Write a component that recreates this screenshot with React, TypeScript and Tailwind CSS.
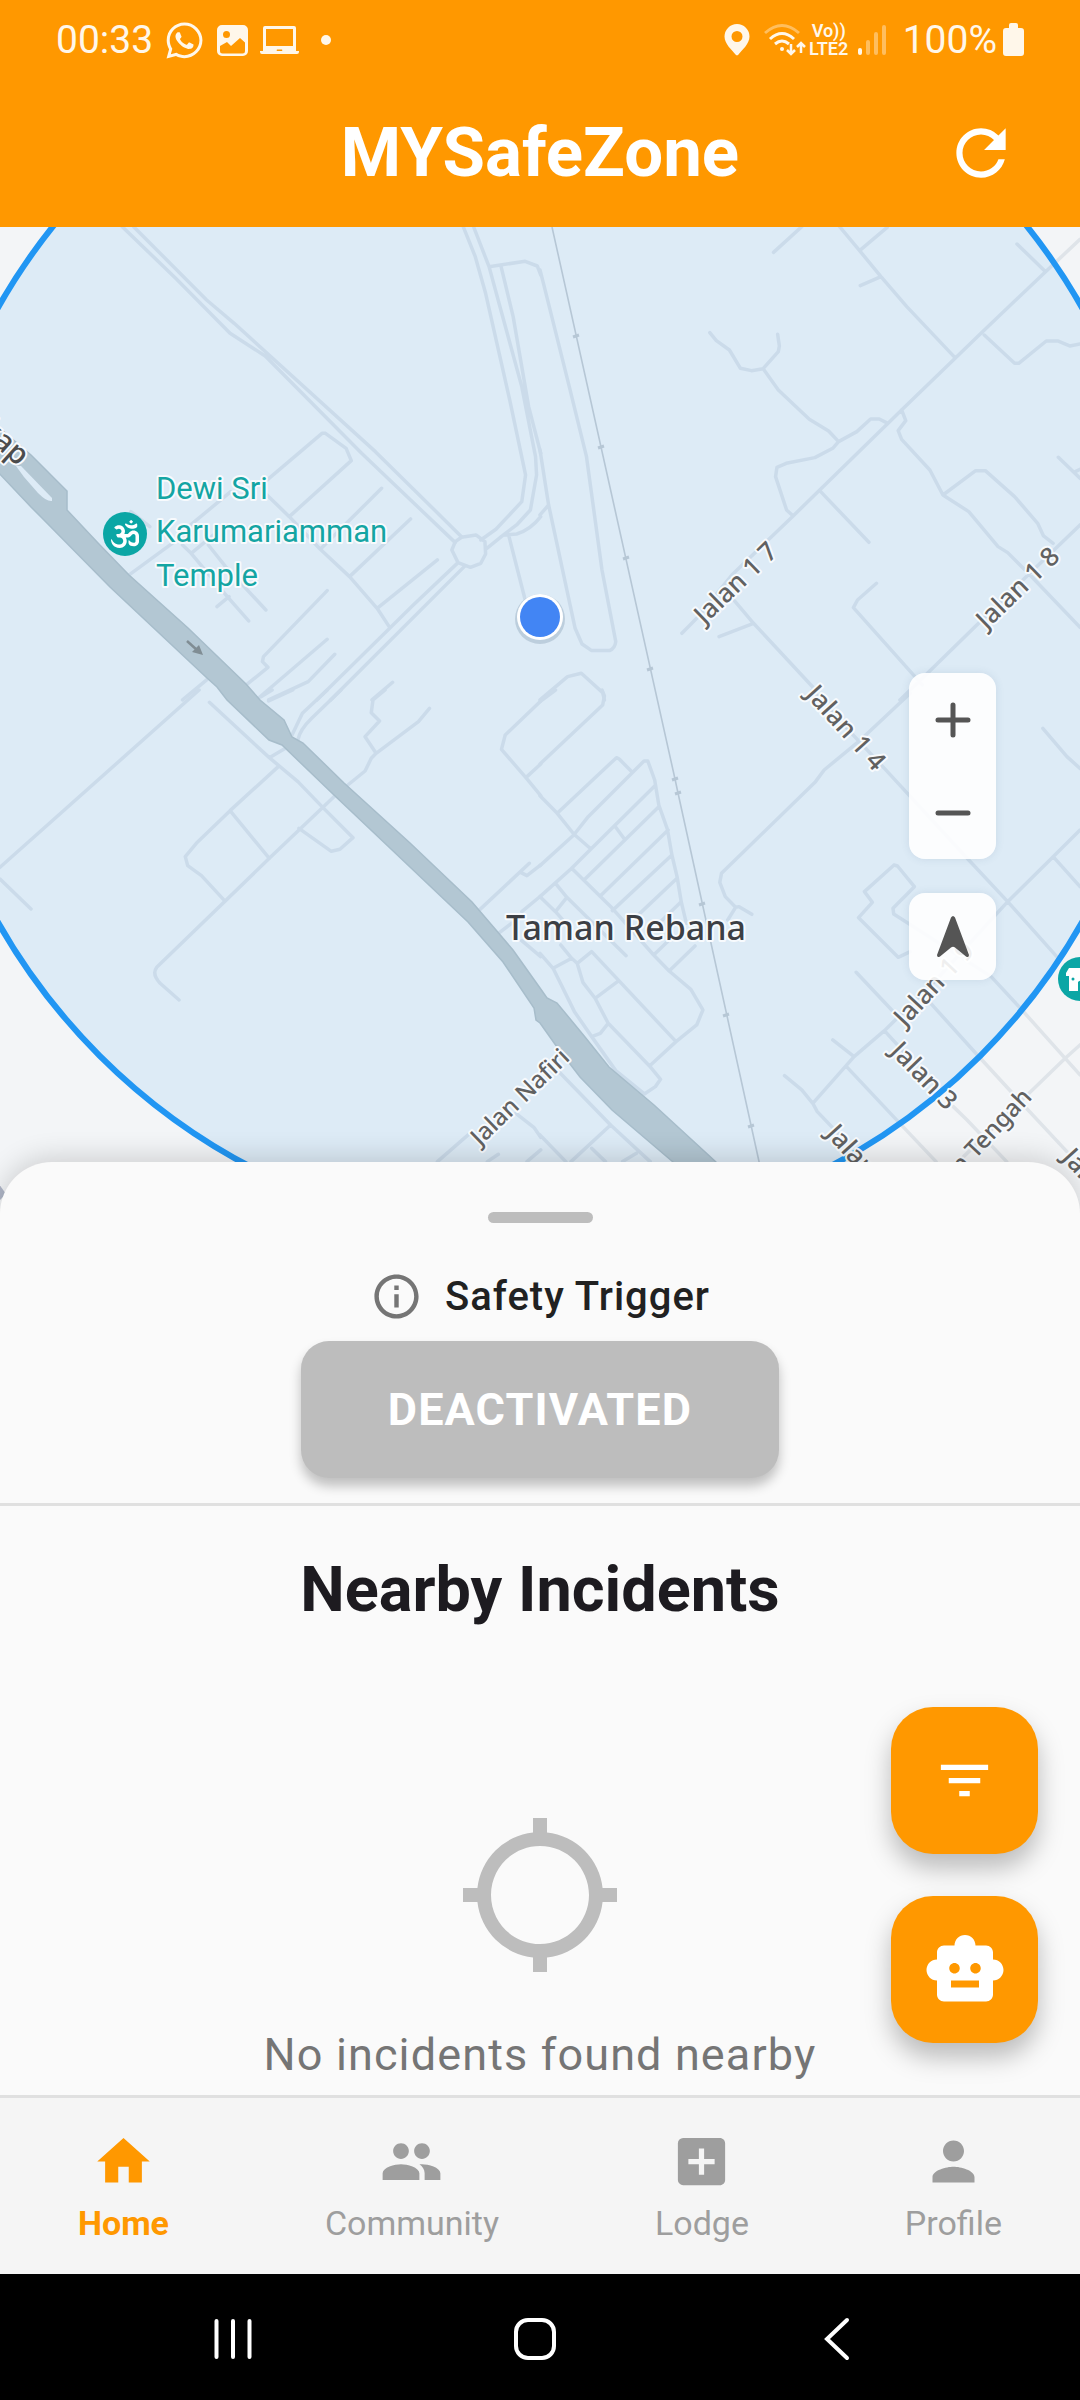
import { FaOm, FaWhatsapp } from "react-icons/fa";
import {
  MdAddBox,
  MdFilterList,
  MdHome,
  MdInfoOutline,
  MdLocationSearching,
  MdPeople,
  MdPerson,
  MdRefresh,
  MdSmartToy,
} from "react-icons/md";

/* Street geometry, stored per tile in tile units. */
const tiles = [
  {
    id: "north-west",
    transform: "translate(0 220) scale(0.3444 0.3333)",
    roads:
      "M355 20 L510 175 L668 340 L770 408 L1050 700 L1322 968 M388 20 L600 240 L680 310 L1090 695 L1340 950 M1340 952 L1382 945 L1408 965 L1410 1002 L1396 1030 L1366 1042 L1330 1028 L1312 990 L1322 965Z M1396 960 L1440 928 L1515 845 L1526 765 L1480 540 L1410 220 L1380 110 L1345 20 M1410 988 L1460 946 L1500 915 L1540 870 L1558 765 L1555 710 L1515 500 L1420 140 L1375 20 M1420 140 L1525 124 L1560 138 L1570 165 M1455 140 L1490 290 L1535 560 L1570 700 M1460 946 L1500 942 Q1540 930 1570 890 M1478 950 L1525 1140 M1330 1028 L1200 1155 L920 1440 M1348 1040 L960 1440 M550 918 L670 815 M770 785 L935 640 L945 640 L1005 685 L1020 722 L840 890 M770 820 L840 890 L930 988 L1015 1070 L1095 1165 L1130 1220 M1108 805 L930 988 M1192 897 L1015 1070 M1270 1020 L1095 1165 M375 1065 L500 970 M530 975 L555 1000 L660 1130 L722 1203 M630 1160 L665 1130 M555 1000 L620 945 M605 975 L655 1040 L772 1170 M950 1112 L765 1310 L762 1325 L778 1342 L715 1395 M950 1258 L750 1435 M972 1303 L895 1385 L780 1440 M1140 1387 L1080 1440 M600 1380 L530 1440 M380 875 L435 920",
  },
  {
    id: "north-east",
    transform: "translate(540 220) scale(0.3444 0.3333)",
    roads:
      "M0 150 L10 190 L85 500 L135 710 L180 1050 L220 1265 Q218 1285 202 1292 L150 1292 L122 1272 L102 1225 L25 855 L0 690 M0 885 L25 855 M678 97 L760 20 M870 20 L928 92 L990 170 L1065 260 L1205 413 M928 92 L1008 22 M930 197 L990 170 M1385 72 L1468 155 M1568 58 L1468 155 L1285 335 L1050 570 L735 888 L560 1062 L455 1195 L412 1240 M1290 345 L1378 430 L1390 430 L1470 363 L1503 363 L1538 378 L1568 372 M493 338 L512 362 L550 390 L582 445 L614 452 L648 446 L692 395 L695 378 L690 343 M648 446 L692 510 L782 598 L838 633 L867 665 M1010 610 L985 597 L960 597 L920 635 L867 665 L850 685 L798 713 L715 730 L688 742 L684 770 L716 870 L735 888 M1050 570 L1062 602 L1040 632 L1050 658 L1132 750 L1170 825 L1245 875 L1330 980 L1358 998 L1420 1062 L1568 1222 M1170 825 L1265 752 L1293 752 L1378 830 L1445 910 L1462 948 L1490 970 M1505 712 L1568 775 M1550 757 L1568 748 M1568 915 L1420 1062 L1090 1395 L1045 1440 M815 815 L955 967 M565 1143 L620 1210 L800 1410 M520 1250 L620 1210 M977 1090 L922 1140 L910 1163 L1110 1395 M0 1440 L80 1370 L120 1360 L182 1418 L187 1440",
  },
  {
    id: "south-west",
    transform: "translate(0 690) scale(0.3444 0.3333)",
    roads:
      "M578 0 L0 532 M0 567 L90 657 M608 37 L782 203 L865 275 L935 350 L1025 443 L987 478 L962 484 L868 415 M782 203 L825 177 M808 230 L668 362 L570 460 L538 500 L545 527 L585 557 L652 632 M668 362 L782 505 M972 318 L782 505 L455 832 Q440 852 465 880 L520 930 M848 135 L878 70 L950 0 M865 150 Q870 120 905 85 L990 0 M758 20 L790 0 M780 33 L850 0 M1118 0 L1083 30 L1078 68 L1102 93 L1060 140 L1092 190 L1215 95 L1247 55 M1092 190 L1078 205 L1060 243 L1010 285 M1568 35 L1467 135 L1456 178 L1527 263 L1570 317 M1527 263 L1570 222 M1390 662 L1537 520 M1513 548 L1530 557 L1570 525 M1515 665 L1570 618 M1450 728 L1485 700 M1515 752 L1570 800 M1498 1270 L1550 1312 L1570 1342 M1270 1415 L1370 1325 M1415 1415 L1447 1393 M1530 1415 L1570 1380",
  },
  {
    id: "south-east",
    transform: "translate(540 690) scale(0.3444 0.3333)",
    roads:
      "M0 35 L45 0 M180 0 L187 18 L182 45 L0 222 M50 370 L222 203 L230 207 L268 247 M0 317 L50 370 L98 432 L148 477 M0 527 L98 435 L140 380 L302 213 L313 213 L333 270 L345 345 L370 418 L383 495 L398 560 L410 635 L425 700 M333 288 L148 477 L92 535 L0 620 M220 412 L245 447 M345 350 L130 568 M372 420 L175 618 M383 495 L210 662 M398 565 L280 680 M410 635 L350 695 M92 535 L210 655 L330 795 L375 843 L438 898 L473 960 L455 1005 L395 1055 L318 1128 L350 1168 L335 1190 L303 1212 L220 1142 L150 1040 L100 965 L38 835 L0 790 M0 620 L45 665 L75 700 M45 580 L78 622 L45 665 M78 622 L150 695 L250 797 M330 795 L370 755 M375 843 L450 768 M38 835 L92 805 L60 765 M92 805 L108 820 L125 878 L160 925 L198 1000 L318 1128 M108 820 L150 785 L395 1055 M225 875 L160 925 M198 1000 L175 1030 L150 1040 M545 690 L568 652 L538 620 L522 577 L527 550 L800 275 L825 240 L925 155 L1075 10 M568 652 L578 650 L615 673 M790 0 L900 125 L1000 235 L1245 510 L1358 635 L1505 805 M1568 420 L1490 500 L1358 635 L1150 870 L1000 1022 L912 1100 L792 1240 L805 1265 L865 1330 M1490 500 L1568 590 M1460 115 L1530 200 L1568 235 M1028 525 L1038 528 L1087 590 L1025 655 L1027 672 L1310 860 L1395 955 L1525 1105 L1568 1155 M1028 525 L942 605 L965 637 L925 683 L1040 802 L1075 785 M918 847 L1035 975 M850 1050 L912 1100 M710 1157 L760 1200 L792 1240 M890 1130 L1040 1295 L1150 1415 M1000 1022 L1060 1090 M1130 935 L1270 1095 L1390 1230 L1530 1385 M1200 1250 L1240 1290 L1355 1415 M1568 1065 L1525 1105 L1420 1210 L1230 1400 M50 1140 L205 1305 L320 1415 M205 1305 L90 1415 M0 1335 L75 1415 M150 1375 L190 1415 M280 1390 L240 1415",
  },
];

const highway =
  "M-4 425 L31 455 L67 491 L67 510 L98 543 L129 575 L188 628 L246 684 L260 700 L284 720 L292 737 L303 743 L344 783 L410 843 L472 902 L496 930 L513 950 L540 988 L547 998 L557 1003 L585 1037 L609 1067 L654 1105 L716 1162 L760 1200 L720 1200 L673 1162 L612 1110 L580 1077 L557 1047 L540 1023 L536 1020 L534 1008 L503 962 L468 922 L334 795 L282 745 L269 740 L227 700 L217 687 L207 678 L110 587 L41 517 L31 507 L-4 470Z";

const sleepers = [
  [576, 336],
  [601, 447],
  [626, 558],
  [650, 669],
  [675, 779],
  [678, 793],
  [702, 904],
  [726, 1015],
  [751, 1126],
];

const streetLabels = [
  { text: "Jalan 1 7", x: 735, y: 582, angle: -44, size: 26 },
  { text: "Jalan 1 8", x: 1017, y: 587, angle: -44, size: 26 },
  { text: "Jalan 1 4", x: 847, y: 727, angle: 48, size: 26 },
  { text: "Jalan 1 9", x: 933, y: 983, angle: -47, size: 26 },
  { text: "Jalan 3", x: 925, y: 1075, angle: 46, size: 26 },
  { text: "Jalan Nafiri", x: 519, y: 1096, angle: -44, size: 24 },
  { text: "Jalan Tengah", x: 976, y: 1145, angle: -47, size: 24 },
  { text: "Jalan 1", x: 860, y: 1158, angle: 48, size: 26 },
  { text: "Jalan 2", x: 1096, y: 1182, angle: 48, size: 26 },
];

function CityMap() {
  return (
    <svg
      viewBox="0 227 1080 983"
      preserveAspectRatio="xMidYMin slice"
      className="absolute inset-0 h-full w-full"
      role="img"
      aria-label="Map around Taman Rebana"
    >
      <rect x="-500" y="0" width="2080" height="1400" fill="#f3f5f7" />
      <g fill="none" stroke="#dfe4e9" strokeWidth="3.5" strokeLinecap="round" strokeLinejoin="round">
        {tiles.map((tile) => (
          <g key={tile.id} transform={tile.transform}>
            <path d={tile.roads} vectorEffect="non-scaling-stroke" />
          </g>
        ))}
      </g>
      <path d={highway} fill="#c4cdd0" stroke="#b7c2c6" strokeWidth="1.5" />
      <path d="M16 466 L24 477 L38 493 Q47 502 52 501 L52 498 L21 466Z" fill="#f3f5f7" />
      <path d="M-4 1180 L6 1194 L-4 1204Z" fill="#b0b7c8" />
      <g fill="none" stroke="#c8cdd2">
        <path d="M552 227 L675 779 L678 793 L760 1166" strokeWidth="1.6" />
        {sleepers.map(([x, y]) => (
          <path key={y} d={`M${x - 3} ${y + 1} L${x + 3} ${y - 1}`} strokeWidth="3" />
        ))}
      </g>
      <circle cx="540" cy="615" r="623" fill="#2196f3" fillOpacity="0.1" />
      <circle cx="540" cy="615" r="623" fill="none" stroke="#2196f3" strokeWidth="6" />
      <path d="M187 641 L197 650" stroke="#808d94" strokeWidth="2.5" />
      <path d="M203 655 L192 652 L199 645Z" fill="#808d94" />

      <g
        fontFamily="'Noto Sans', sans-serif"
        fontWeight="500"
        fill="#616161"
        stroke="#f7fafd"
        strokeWidth="4"
        strokeLinejoin="round"
        paintOrder="stroke"
      >
        {streetLabels.map((label) => (
          <text
            key={label.text}
            transform={`translate(${label.x} ${label.y}) rotate(${label.angle})`}
            dominantBaseline="central"
            textAnchor="middle"
            fontSize={label.size}
          >
            {label.text}
          </text>
        ))}
        <text transform="translate(18 467) rotate(42)" textAnchor="end" fontSize="30" fill="#4c4c4c">
          kap
        </text>
        <text x="506" y="940" fontSize="34" fill="#3c3f45">
          Taman Rebana
        </text>
        <g fontFamily="Roboto, sans-serif" fontWeight="400" fontSize="31" fill="#14a5a3">
          <text x="156" y="499">Dewi Sri</text>
          <text x="156" y="542">Karumariamman</text>
          <text x="156" y="586">Temple</text>
        </g>
      </g>

      <circle cx="125" cy="534" r="22" fill="#0ba6a5" />
      <FaOm x={111} y={520} size={28} color="#ffffff" />

      <circle cx="1080" cy="979" r="22" fill="#0ba6a5" />
      <path
        d="M1069 968 h22 l3 7 h-3 v16 h-22 v-15 h-3 v-3 z M1078 991 v-9 a4 4 0 0 1 6 0 v9 z"
        fill="#ffffff"
        fillRule="evenodd"
      />
      <circle cx="1073" cy="979" r="1.5" fill="#0ba6a5" />

      <circle cx="540" cy="619" r="25" fill="#5b7894" fillOpacity="0.25" />
      <circle cx="540" cy="617" r="23" fill="#ffffff" />
      <circle cx="540" cy="617" r="20" fill="#4285f4" />
    </svg>
  );
}

function StatusBar() {
  return (
    <div className="flex h-20 items-center justify-between pr-14 pl-14 text-[#fff7ea]">
      <div className="flex items-center">
        <span className="w-[100px] text-[39px] leading-10">00:33</span>
        <FaWhatsapp className="ml-2 size-[41px]" />
        <svg viewBox="0 0 31 31" className="ml-3 size-[31px]" aria-hidden="true">
          <path
            fill="currentColor"
            fillRule="evenodd"
            d="M5 0h21a5 5 0 0 1 5 5v21a5 5 0 0 1-5 5H5a5 5 0 0 1-5-5V5a5 5 0 0 1 5-5zM9.500 6a3.500 3.500 0 1 0 0 7a3.500 3.500 0 1 0 0-7zM3 21v5a2.500 2.500 0 0 0 2.500 2.500h20A2.500 2.500 0 0 0 28 26v-8.500L23 13l-9 8-4-4z"
          />
        </svg>
        <svg viewBox="0 0 39 28" className="ml-3 h-7 w-[39px]" aria-hidden="true">
          <path
            fill="currentColor"
            fillRule="evenodd"
            d="M5 0h29a2 2 0 0 1 2 2v23h3v1a2 2 0 0 1-2 2H2a2 2 0 0 1-2-2v-1h3V2a2 2 0 0 1 2-2zM6 3v17h27V3zM17 23.500a1 1 0 0 0 0 1.500h5a1 1 0 0 0 0-1.500z"
          />
        </svg>
        <span className="ml-[22px] size-2.5 rounded-full bg-current" />
      </div>
      <div className="flex items-center">
        <svg viewBox="0 0 26 32" className="h-8 w-[26px]" aria-hidden="true">
          <path
            fill="currentColor"
            fillRule="evenodd"
            d="M13 0a12.500 12.500 0 0 1 12.500 12.500C25.500 20 18 26 14.500 30.500a2 2 0 0 1-3 0C8 26 .5 20 .5 12.500A12.500 12.500 0 0 1 13 0zm0 7a5.500 5.500 0 1 0 0 11a5.500 5.500 0 1 0 0-11z"
          />
        </svg>
        <svg viewBox="0 0 42 34" className="ml-3.5 h-[34px] w-[42px]" fill="none" stroke="currentColor" aria-hidden="true">
          <path d="M1 10 Q18 -5 35 10" strokeWidth="3" opacity="0.4" />
          <path d="M6 16 Q18 5 30 16" strokeWidth="3" />
          <path d="M11 21 Q18 15 25 21" strokeWidth="3" />
          <circle cx="18" cy="26" r="2" fill="currentColor" stroke="none" />
          <path d="M27 21v10M23 27l4 4 4-4M37 30V20M33 24l4-4 4 4" strokeWidth="2.500" />
        </svg>
        <div className="ml-0.5 w-[42px] text-center text-[18px] leading-[18px] font-semibold">
          Vo))
          <br />
          LTE2
        </div>
        <svg viewBox="0 0 29 30" className="ml-2 h-[30px] w-[29px]" fill="none" stroke="currentColor" strokeWidth="4" strokeLinecap="round" aria-hidden="true">
          <path d="M2 25v3" />
          <path d="M10 17v11M18 9v19M26 2v26" opacity="0.4" />
        </svg>
        <span className="ml-4 text-[39px] leading-10">100%</span>
        <svg viewBox="0 0 21 34" className="ml-1.5 h-[34px] w-[21px]" aria-hidden="true">
          <path fill="currentColor" d="M6 2q0-2 2-2h5q2 0 2 2v3h3q3 0 3 3v22q0 3-3 3H3q-3 0-3-3V8q0-3 3-3h3z" />
        </svg>
      </div>
    </div>
  );
}

const navItems = [
  { label: "Home", Icon: MdHome, active: true },
  { label: "Community", Icon: MdPeople, active: false },
  { label: "Lodge", Icon: MdAddBox, active: false },
  { label: "Profile", Icon: MdPerson, active: false },
];

export default function App() {
  return (
    <div className="flex min-h-screen flex-col bg-[#fafafa] font-['Roboto',sans-serif]">
      <header className="bg-[#ff9800]">
        <StatusBar />
        <div className="grid h-[147px] grid-cols-[1fr_auto_1fr] items-center pb-0.5">
          <h1 className="col-start-2 text-[69px] leading-20 font-bold text-white">MYSafeZone</h1>
          <button type="button" aria-label="Refresh" className="mr-[62px] justify-self-end text-white">
            <MdRefresh className="size-[74px]" />
          </button>
        </div>
      </header>

      <main className="flex flex-1 flex-col">
        <section className="relative min-h-[600px] flex-1 overflow-hidden">
          <CityMap />
          <div className="absolute top-[446px] right-[84px] flex flex-col gap-[34px] text-[#555555]">
            <div className="flex w-[87px] flex-col rounded-2xl bg-white/90 shadow-[0_0_8px_rgba(60,90,120,0.12)]">
              <button type="button" aria-label="Zoom in" className="flex h-[93px] items-center justify-center">
                <svg viewBox="0 0 36 36" className="size-9" stroke="currentColor" strokeWidth="5" strokeLinecap="round">
                  <path d="M18 3v30M3 18h30" />
                </svg>
              </button>
              <button type="button" aria-label="Zoom out" className="flex h-[93px] items-center justify-center">
                <svg viewBox="0 0 36 36" className="size-9" stroke="currentColor" strokeWidth="5" strokeLinecap="round">
                  <path d="M3 18h30" />
                </svg>
              </button>
            </div>
            <button
              type="button"
              aria-label="My location"
              className="flex size-[87px] items-center justify-center rounded-2xl bg-white/90 shadow-[0_0_8px_rgba(60,90,120,0.12)]"
            >
              <svg viewBox="0 0 32 42" className="h-[42px] w-8" fill="currentColor">
                <path d="M14 1.500q2-3 4 0L32 39q0 3-3 1.500L18 31.500q-2-1.500-4 0L3 40.500Q0 42 0 39z" />
              </svg>
            </button>
          </div>
        </section>

        <section className="relative -mt-12 flex flex-col items-center rounded-t-[52px] bg-[#fafafa] pt-[50px] pb-3 shadow-[0_-4px_28px_rgba(0,0,0,0.16)]">
          <div className="h-[11px] w-[105px] rounded-full bg-[#bdbdbd]" />
          <div className="mt-[47px] flex items-center gap-[22px]">
            <MdInfoOutline className="size-[53px] text-[#757575]" />
            <h2 className="text-[40px] leading-[48px] font-medium tracking-wide text-[#212121]">Safety Trigger</h2>
          </div>
          <button
            type="button"
            className="mt-[18px] h-[137px] w-[478px] rounded-[28px] bg-[#bdbdbd] text-[45px] leading-[56px] font-bold tracking-wide text-white shadow-[0_8px_12px_rgba(0,0,0,0.24)]"
          >
            DEACTIVATED
          </button>
          <hr className="mt-[25px] w-full border-t-[3px] border-[#e0e0e0]" />
          <h2 className="mt-12 text-[63px] leading-[72px] font-bold text-[#1d1b20]">Nearby Incidents</h2>
          <MdLocationSearching className="mt-[185px] size-[168px] text-[#bdbdbd]" />
          <p className="mt-12 text-[45px] leading-[56px] tracking-wide text-[#757575]">No incidents found nearby</p>

          <div className="absolute right-[42px] bottom-[52px] flex flex-col gap-[42px] text-white">
            <button
              type="button"
              aria-label="Filter incidents"
              className="flex size-[147px] items-center justify-center rounded-[42px] bg-[#ff9800] shadow-[0_14px_26px_rgba(0,0,0,0.26)]"
            >
              <MdFilterList className="size-[63px]" />
            </button>
            <button
              type="button"
              aria-label="Assistant"
              className="flex size-[147px] items-center justify-center rounded-[42px] bg-[#ff9800] shadow-[0_14px_26px_rgba(0,0,0,0.26)]"
            >
              <MdSmartToy className="size-[84px]" />
            </button>
          </div>
        </section>
      </main>

      <nav className="relative flex justify-around border-t-[3px] border-[#e0e0e0] bg-[#f5f5f5] pt-8 pb-[31px]">
        {navItems.map(({ label, Icon, active }) => (
          <a
            key={label}
            href={`#${label.toLowerCase()}`}
            aria-current={active ? "page" : undefined}
            className={
              active
                ? "flex flex-col items-center gap-2.5 font-bold text-[#ff9800]"
                : "flex flex-col items-center gap-2.5 text-[#9e9e9e]"
            }
          >
            <Icon className="size-[63px]" />
            <span className="text-[34px] leading-10">{label}</span>
          </a>
        ))}
      </nav>

      <div className="flex h-[126px] items-center bg-black pt-1 pr-[92px] pl-[82px] text-white">
        <button type="button" aria-label="Recent apps" className="flex flex-1 justify-center">
          <svg viewBox="0 0 42 44" className="h-11 w-[42px]" fill="none" stroke="currentColor" strokeWidth="4" strokeLinecap="round">
            <path d="M4.500 4v36M21 4v36M37.500 4v36" />
          </svg>
        </button>
        <button type="button" aria-label="Home screen" className="flex flex-1 justify-center">
          <svg viewBox="0 0 44 44" className="size-11" fill="none" stroke="currentColor" strokeWidth="4">
            <rect x="3" y="3" width="38" height="38" rx="12" />
          </svg>
        </button>
        <button type="button" aria-label="Back" className="flex flex-1 justify-center">
          <svg viewBox="0 0 28 44" className="h-11 w-7" fill="none" stroke="currentColor" strokeWidth="4" strokeLinecap="round">
            <path d="M24 3 L4 22 L24 41" />
          </svg>
        </button>
      </div>
    </div>
  );
}
